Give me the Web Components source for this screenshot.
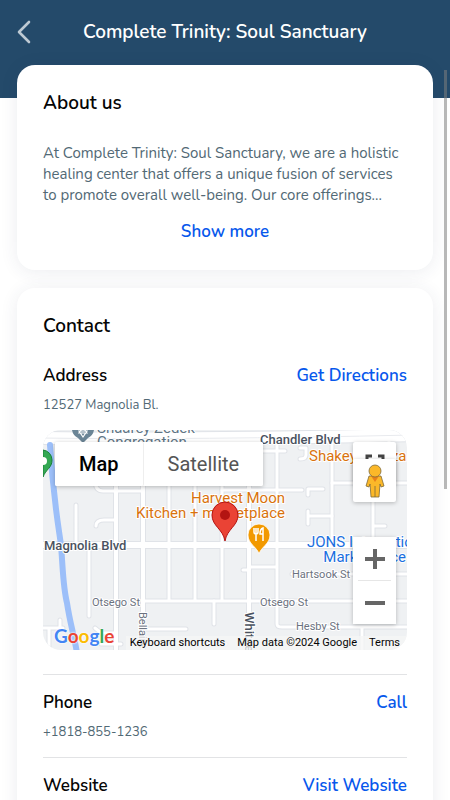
<!DOCTYPE html>
<html lang="en">
<head>
  <meta charset="UTF-8">
  <meta name="viewport" content="width=device-width, initial-scale=1">
  <title>Complete Trinity: Soul Sanctuary</title>
  <style>
    :root {
      --navy: #244a6a;
      --link: #0758ec;
      --muted: #526975;
      --line: #e2e3e5;
    }
    body {
      margin: 0;
      background: #fff;
      color: #050505;
      font-family: Nunito, Lato, "Open Sans", sans-serif;
    }
  </style>
</head>
<body>
  <business-page>
    <page-header slot="header">Complete Trinity: Soul Sanctuary</page-header>
    <info-card heading="About us">
      <about-text>At Complete Trinity: Soul Sanctuary, we are a holistic healing center that offers a unique fusion of services to promote overall well-being. Our core offerings...</about-text>
    </info-card>
    <info-card heading="Contact">
      <contact-row label="Address" action="Get Directions" href="#directions">
        12527 Magnolia Bl.
        <area-map slot="extra"></area-map>
      </contact-row>
      <contact-row label="Phone" action="Call" href="tel:+18188551236">+1818-855-1236</contact-row>
      <contact-row label="Website" action="Visit Website" href="#website"></contact-row>
    </info-card>
  </business-page>

  <script>
    class BusinessPage extends HTMLElement {
      constructor() {
        super();
        this.attachShadow({ mode: "open" }).innerHTML = `
          <style>
            :host {
              display: block;
              position: relative;
              height: 100vh;
              overflow: hidden;
            }
            main {
              display: flex;
              flex-direction: column;
              gap: 18px;
              position: relative;
              margin-top: -33px;
              padding: 0 17px;
            }
            .thumb {
              position: absolute;
              top: 70px;
              right: 3px;
              width: 3px;
              height: 419px;
              background: rgba(125, 125, 125, 0.55);
            }
          </style>
          <slot name="header"></slot>
          <main><slot></slot></main>
          <div class="thumb"></div>
        `;
      }
    }

    class PageHeader extends HTMLElement {
      constructor() {
        super();
        this.attachShadow({ mode: "open" }).innerHTML = `
          <style>
            :host {
              display: block;
              background: var(--navy);
              color: #fff;
              padding-bottom: 34px;
            }
            header {
              display: grid;
              grid-template-columns: 32px 1fr 32px;
              align-items: center;
              height: 64px;
              padding: 0 8px;
            }
            button {
              display: flex;
              justify-content: center;
              padding: 0;
              border: 0;
              background: none;
              cursor: pointer;
            }
            h1 {
              margin: 0;
              font-size: 19px;
              line-height: 24px;
              font-weight: 600;
              text-align: center;
            }
          </style>
          <header>
            <button aria-label="Back">
              <svg width="16" height="24" viewBox="0 0 16 24" fill="none" stroke="#bdc9d3" stroke-width="2.6" stroke-linecap="round" stroke-linejoin="round">
                <path d="M13 2 3 12l10 10"/>
              </svg>
            </button>
            <h1><slot></slot></h1>
          </header>
        `;
      }
    }

    class InfoCard extends HTMLElement {
      constructor() {
        super();
        this.attachShadow({ mode: "open" }).innerHTML = `
          <style>
            :host {
              display: block;
              padding: 26px;
              border-radius: 18px;
              background: #fff;
              box-shadow: 0 2px 18px rgba(40, 50, 90, 0.09);
            }
            h2 {
              margin: 0 0 28px;
              font-size: 19px;
              line-height: 24px;
              font-weight: 600;
            }
          </style>
          <h2>${this.getAttribute("heading")}</h2>
          <slot></slot>
        `;
      }
    }

    class AboutText extends HTMLElement {
      constructor() {
        super();
        this.attachShadow({ mode: "open" }).innerHTML = `
          <style>
            :host {
              display: block;
              text-align: center;
            }
            p {
              margin: 0 0 14px;
              color: var(--muted);
              font-size: 15px;
              line-height: 21px;
              text-align: left;
            }
            button {
              padding: 0;
              border: 0;
              background: none;
              color: var(--link);
              font: inherit;
              font-size: 17px;
              line-height: 24px;
              font-weight: 600;
              cursor: pointer;
            }
          </style>
          <p><slot></slot></p>
          <button>Show more</button>
        `;
      }
    }

    class ContactRow extends HTMLElement {
      constructor() {
        super();
        this.attachShadow({ mode: "open" }).innerHTML = `
          <style>
            :host {
              display: block;
              padding-bottom: 16px;
            }
            :host(:not(:first-of-type)) {
              border-top: 1px solid var(--line);
              padding-top: 16px;
            }
            :host(:first-of-type) {
              padding-bottom: 24px;
              margin-top: -2px;
            }
            .top {
              display: flex;
              justify-content: space-between;
              font-size: 17px;
              line-height: 24px;
              font-weight: 600;
            }
            h3 {
              margin: 0;
              font: inherit;
            }
            a {
              color: var(--link);
              text-decoration: none;
            }
            p {
              margin: 8px 0 0;
              color: var(--muted);
              font-size: 13px;
              line-height: 18px;
            }
            ::slotted([slot="extra"]) {
              margin-top: 16px;
            }
          </style>
          <div class="top">
            <h3>${this.getAttribute("label")}</h3>
            <a href="${this.getAttribute("href")}">${this.getAttribute("action")}</a>
          </div>
          <p><slot></slot></p>
          <slot name="extra"></slot>
        `;
      }
    }

    class AreaMap extends HTMLElement {
      constructor() {
        super();
        this.attachShadow({ mode: "open" }).innerHTML = `
          <style>
            :host {
              display: block;
              position: relative;
              height: 220px;
              border-radius: 18px;
              overflow: hidden;
              background: #eff1f3;
              font-family: Roboto, "Liberation Sans", sans-serif;
            }
            .canvas {
              display: block;
              width: 100%;
              height: 100%;
            }
            .road {
              fill: none;
              stroke-linecap: round;
              stroke-linejoin: round;
            }
            text {
              paint-order: stroke;
              stroke: #fff;
              stroke-width: 2px;
              stroke-linejoin: round;
            }
            .major { font-size: 13px; font-weight: 500; fill: #4a5260; }
            .minor { font-size: 11px; fill: #6b7280; }
            .food { font-size: 15px; fill: #d9730d; }
            .shop { font-size: 15px; fill: #1a6fe0; }
            .place { font-size: 15px; fill: #5f7585; }
            button {
              display: flex;
              align-items: center;
              justify-content: center;
              margin: 0;
              padding: 0;
              border: 0;
              background: #fff;
              font: inherit;
              cursor: pointer;
            }
            .types, .tile, .zoom {
              position: absolute;
              background: #fff;
              border-radius: 2px;
              box-shadow: 0 1px 4px rgba(0, 0, 0, 0.25);
            }
            .types {
              display: flex;
              top: 12px;
              left: 12px;
              height: 44px;
              font-size: 20px;
              color: #555;
            }
            .types button {
              padding: 0 24px;
              color: inherit;
              border-radius: 2px;
            }
            .types .on {
              color: #000;
              font-weight: 500;
              border-right: 1px solid #eee;
            }
            .tile, .zoom {
              right: 11px;
              width: 43px;
            }
            .tile {
              height: 43px;
            }
            .full { top: 12px; }
            .man { top: 29px; }
            .zoom {
              top: 107px;
            }
            .zoom button {
              width: 43px;
              height: 43px;
            }
            .zoom hr {
              margin: 0 5px;
              border: 0;
              border-top: 1px solid #e6e6e6;
            }
            footer {
              display: flex;
              gap: 12px;
              position: absolute;
              right: 0;
              bottom: 0;
              padding: 0 7px 0 4px;
              background: rgba(245, 245, 245, 0.75);
              font-size: 11px;
              line-height: 14px;
            }
            footer button {
              background: none;
            }
            footer a {
              color: inherit;
              text-decoration: none;
            }
            .logo {
              position: absolute;
              left: 11px;
              bottom: 2px;
              font: 700 19px/24px Lato, sans-serif;
              text-decoration: none;
              text-shadow: 0 0 2px #fff, 0 0 2px #fff;
            }
            .b { color: #4285f4; }
            .r { color: #ea4335; }
            .y { color: #fbbc04; }
            .g { color: #34a853; }
          </style>

          <svg class="canvas" viewBox="0 0 364 220" preserveAspectRatio="xMidYMid slice">
            <defs>
              <g id="side">
                <path d="M52 50q0 11 8 11h40M53 96q0-6 8-6h12M33 75v40M46 115v71M126 50v121M152 50v121M179 50v121M100 171h264"/>
                <path d="M171 171v23M100 199h43M0 198h20M6 198v22M17 190v8M52 198l6 5h15M58 214h20M143 214h40"/>
                <path d="M220 21h22M257 18h6v7q0 4-6 4M179 60h80M265 65v-6h15M265 81v13M265 86h24M330 72v43M330 96h12M289 53h75"/>
                <path d="M200 140h6M206 137h28M249 144h115M234 10v184q0 3 5 3h125M319 197v23M289 10v105M346 10v50"/>
              </g>
              <g id="main">
                <path d="M73 50v170M100 50v170M206 50v170"/>
              </g>
            </defs>
            <g class="road">
              <use href="#side" stroke="#e0e3e8" stroke-width="5"/>
              <use href="#main" stroke="#e0e3e8" stroke-width="6"/>
              <path d="M-5 115h375" stroke="#e0e3e8" stroke-width="8"/>
              <path d="M-5 8Q150 10 370 5" stroke="#e0e3e8" stroke-width="14"/>
              <use href="#side" stroke="#fff" stroke-width="3"/>
              <use href="#main" stroke="#fff" stroke-width="4"/>
              <path d="M-5 115h375" stroke="#fff" stroke-width="6"/>
              <path d="M-5 8Q150 10 370 5" stroke="#fff" stroke-width="12"/>
              <path d="M-5 8Q150 10 370 5" stroke="#e8eaee" stroke-width="1"/>
              <path d="M7 15c3 50 7 72 11 100 2 25 2 42 6 58 3 20 7 32 10 50" stroke="#9cbff9" stroke-width="6"/>
            </g>

            <!-- streets -->
            <text class="major" x="217" y="14">Chandler Blvd</text>
            <text class="major" x="1" y="120">Magnolia Blvd</text>
            <text class="major" transform="translate(202 182) rotate(90)">Whitsett Ave</text>
            <text class="minor" transform="translate(96 182) rotate(90)">Bellaire Ave</text>
            <text class="minor" x="49" y="176">Otsego St</text>
            <text class="minor" x="217" y="176">Otsego St</text>
            <text class="minor" x="249" y="148">Hartsook St</text>
            <text class="minor" x="253" y="200">Hesby St</text>

            <!-- places -->
            <text class="place" x="54" y="3">Shaarey Zedek</text>
            <text class="place" x="54" y="17">Congregation</text>
            <text class="food" x="266" y="31">Shakey's Pizza</text>
            <text class="food" x="242" y="73" text-anchor="end">Harvest Moon</text>
            <text class="food" x="242" y="88" text-anchor="end">Kitchen + marketplace</text>
            <text class="shop" x="264" y="117">JONS International</text>
            <text class="shop" x="363" y="132" text-anchor="end">Marketplace</text>

            <path d="M29 0a11 11 0 0 0 6 8l5 5 5-5a11 11 0 0 0 6-8z" fill="#6b8596"/>
            <path d="M40 7l-4-6h8zM40-3l4 6h-8z" fill="none" stroke="#fff" stroke-width="1.2"/>
            <path d="M0 20a10 10 0 0 1 9 10c0 8-6 9-9 17z" fill="#34a853" stroke="#188038"/>
            <circle cx="0" cy="31" r="4" fill="#fff"/>
            <path d="M216 124c-2-7-11-10-11-19a11 11 0 0 1 22 0c0 9-9 12-11 19z" fill="#f29900" stroke="#fff" stroke-width=".8"/>
            <path d="M211 98v4q0 2 2 2t2-2v-4M213 98v13M220 111V98q-3 1-3 6h3" fill="none" stroke="#fff" stroke-width="1.5"/>
            <path d="M182 111c-2-12-13-15-13-26a13 13 0 0 1 26 0c0 11-11 14-13 26z" fill="#ea4335" stroke="#b31412"/>
            <circle cx="182" cy="85" r="5" fill="#b31412"/>
          </svg>

          <div class="types">
            <button class="on">Map</button>
            <button>Satellite</button>
          </div>

          <button class="tile full" aria-label="Toggle fullscreen view">
            <svg width="20" height="20" viewBox="0 0 20 20" fill="none" stroke="#444" stroke-width="3">
              <path d="M2 7V2h5M13 2h5v5M18 13v5h-5M7 18H2v-5"/>
            </svg>
          </button>
          <button class="tile man" aria-label="Street View">
            <svg width="20" height="34" viewBox="0 0 20 34" stroke="#7d6a3a" stroke-width=".8" stroke-linejoin="round">
              <path d="M4 12h12l3 10-3 1-1-3-1 13H6L5 20l-1 3-3-1z" fill="#fbb829"/>
              <path d="M10 22v11"/>
              <path d="m6 12 4 6 4-6z" fill="#e8801a" stroke="none"/>
              <circle cx="10" cy="7" r="6" fill="#fbb829"/>
            </svg>
          </button>

          <div class="zoom">
            <button aria-label="Zoom in">
              <svg width="20" height="20" stroke="#666" stroke-width="4"><path d="M0 10h20M10 0v20"/></svg>
            </button>
            <hr>
            <button aria-label="Zoom out">
              <svg width="20" height="20" stroke="#666" stroke-width="4"><path d="M0 10h20"/></svg>
            </button>
          </div>

          <a class="logo" href="#google"><span class="b">G</span><span class="r">o</span><span class="y">o</span><span class="b">g</span><span class="g">l</span><span class="r">e</span></a>
          <footer>
            <button>Keyboard shortcuts</button>
            <span>Map data ©2024 Google</span>
            <a href="#terms">Terms</a>
          </footer>
        `;
      }
    }

    customElements.define("business-page", BusinessPage);
    customElements.define("page-header", PageHeader);
    customElements.define("info-card", InfoCard);
    customElements.define("about-text", AboutText);
    customElements.define("contact-row", ContactRow);
    customElements.define("area-map", AreaMap);
  </script>
</body>
</html>
